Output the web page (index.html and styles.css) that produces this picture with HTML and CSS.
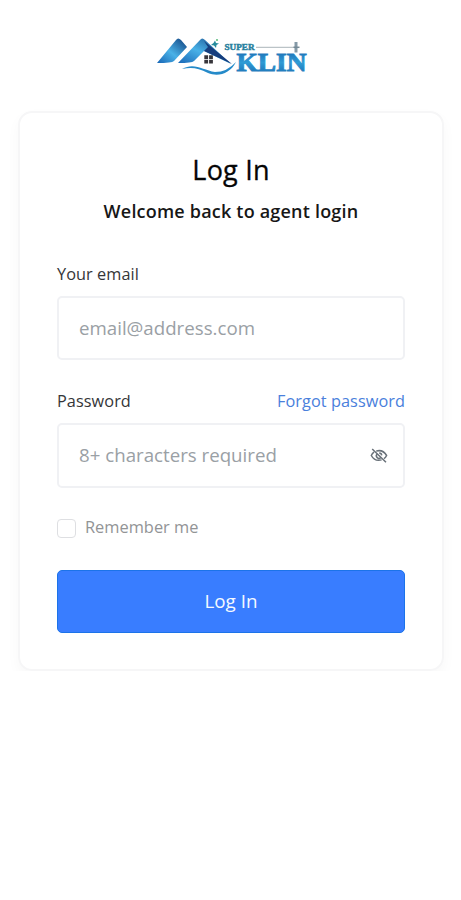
FILE: index.html
```html
<!DOCTYPE html>
<html lang="en">
<head>
<meta charset="utf-8">
<meta name="viewport" content="width=device-width, initial-scale=1">
<title>Log In</title>
<link rel="stylesheet" href="styles.css">
</head>
<body>
<header class="brand">
<svg class="logo" viewBox="0 0 154 42" role="img" aria-label="Super Klin">
<defs>
<linearGradient id="roof" x1="0" y1="1" x2="1" y2="0"><stop offset="0" stop-color="#1765b5"/><stop offset=".45" stop-color="#49b1e7"/><stop offset="1" stop-color="#103e7c"/></linearGradient>
<linearGradient id="word" x1="0" y1="0" x2="0" y2="1"><stop offset="0" stop-color="#1763ac"/><stop offset=".5" stop-color="#2f9bd5"/><stop offset="1" stop-color="#1868ad"/></linearGradient>
</defs>
<path d="M3 27 22 4Q24 1 27 4L33 11 20 25Q18 27 3 27Z" fill="url(#roof)"/>
<path d="M24 27 46 4Q48 1 51 4L77 28 50 15 40 25Q38 27 24 27Z" fill="url(#roof)"/>
<path d="M50 5 78 28 50 15 54 11Z" fill="#173d7c"/>
<path d="M61 4.5 62 7 65 7.5 62.5 9 62 12 60 9.5 57 9 59.5 7Z" fill="#258c9d"/>
<circle cx="63" cy="4" r="1" fill="#55ba79"/>
<path d="M50.3 19.3h3.8v3.6h-3.8zm4.8 0h3.8v3.6h-3.8zm-4.8 4.5h3.8v3.6h-3.8zm4.8 0h3.8v3.6h-3.8z" fill="#37363b"/>
<path d="M28 33C40 26 49 34 61 36Q73 36 82 26C76 38 64 41 54 37 44 32 38 31 28 33Z" fill="#258ac9"/>
<path d="M102 11.3H141" stroke="#aab4b9" stroke-width="1"/>
<path d="M142 6v10.5" stroke="#8499a6" stroke-width="3"/>
<path d="M139.5 11.3h6" stroke="#748a96" stroke-width="1.5"/>
<text class="logo-super" x="70.5" y="13.5" textLength="30" lengthAdjust="spacingAndGlyphs">SUPER</text>
<text class="logo-klin" x="82.5" y="35" textLength="70" lengthAdjust="spacingAndGlyphs">KLIN</text>
</svg>
</header>
<main class="card">
<h1>Log In</h1>
<p class="subtitle">Welcome back to agent login</p>
<form>
<div class="label-row"><label for="email">Your email</label></div>
<div class="field email-field"><input id="email" type="email" placeholder="email@address.com"></div>
<div class="label-row"><label for="password">Password</label><a href="#">Forgot password</a></div>
<div class="field password-field"><input id="password" type="password" placeholder="8+ characters required">
<svg class="eye" viewBox="0 0 18 18" fill="none" stroke="#687078" stroke-width="1.5" aria-hidden="true"><path d="M2.2 2 16 15.2M6.2 4.1C10.5 2.8 14.4 4.7 16.6 8.5Q15.6 10.5 14 11.7M11.6 12.9C7.3 14.1 3.4 12.3 1.3 8.5Q2.3 6.4 4 5.2M7.1 7A2.5 2.5 0 0 0 10.8 10.5M9.2 5.9A2.6 2.6 0 0 1 11.7 8.4"/></svg></div>
<label class="remember"><input type="checkbox"><span>Remember me</span></label>
<button type="button">Log In</button>
</form>
</main>
</body>
</html>
```
FILE: styles.css
```css
* { box-sizing: border-box; }
body { margin: 0; background: #fff; font-family: "Open Sans", sans-serif; color: #171717; }
.brand { height: 111px; padding-top: 35.5px; display: flex; justify-content: center; }
.logo { width: 154px; height: 42px; }
.logo-super { font: 700 7.5px "Liberation Serif", serif; fill: #287f9e; stroke: #287f9e; stroke-width: .4px; }
.logo-klin { font: 700 26px "Liberation Serif", serif; fill: url(#word); stroke: url(#word); stroke-width: 1px; }
.card { width: 426px; height: 560px; margin: 0 0 0 18px; padding: 39px 37px; border: 2px solid #f6f6f7; border-radius: 14px; box-shadow: 0 6px 14px rgba(0,0,0,.03); }
h1 { margin: 0; text-align: center; font-size: 27px; letter-spacing: .2px; line-height: 36px; font-weight: 500; color: #050505; -webkit-text-stroke: .3px #050505; }
.subtitle { margin: 10px 0 0; text-align: center; font-size: 18px; letter-spacing: .2px; line-height: 27px; font-weight: 600; }
.label-row { height: 24px; display: flex; justify-content: space-between; font-size: 16.3px; letter-spacing: .06px; line-height: 24px; color: #353638; }
form { padding-top: 37px; }
.label-row a { color: #4a80dc; text-decoration: none; }
.field { display: flex; align-items: center; height: 64px; margin-top: 10px; padding: 0 15px 2px 20px; border: 2px solid #f0f1f4; border-radius: 5px; }
.email-field { margin-bottom: 29px; }
.password-field { height: 65px; }
.field input { flex: 1; min-width: 0; width: 100%; padding: 0; border: 0; outline: 0; background: transparent; font: 18.7px "Open Sans", sans-serif; }
.field input::placeholder { color: #9aa0a5; opacity: 1; }
.eye { width: 18px; height: 18px; flex: none; position: relative; top: 1px; }
.remember { display: flex; align-items: center; gap: 9px; height: 24px; margin-top: 28px; font-size: 16.4px; line-height: 22px; color: #929496; }
.remember span { padding-bottom: 2px; }
.remember input { appearance: none; width: 19px; height: 19px; margin: 0; border: 1.5px solid #dedfe2; border-radius: 4px; }
button { display: block; width: 100%; height: 63px; margin-top: 30px; padding: 0 0 1px; border: 1.5px solid #1c73e9; border-radius: 5px; background: #397dff; color: #f5faff; font: 18.8px "Open Sans", sans-serif; }
```
